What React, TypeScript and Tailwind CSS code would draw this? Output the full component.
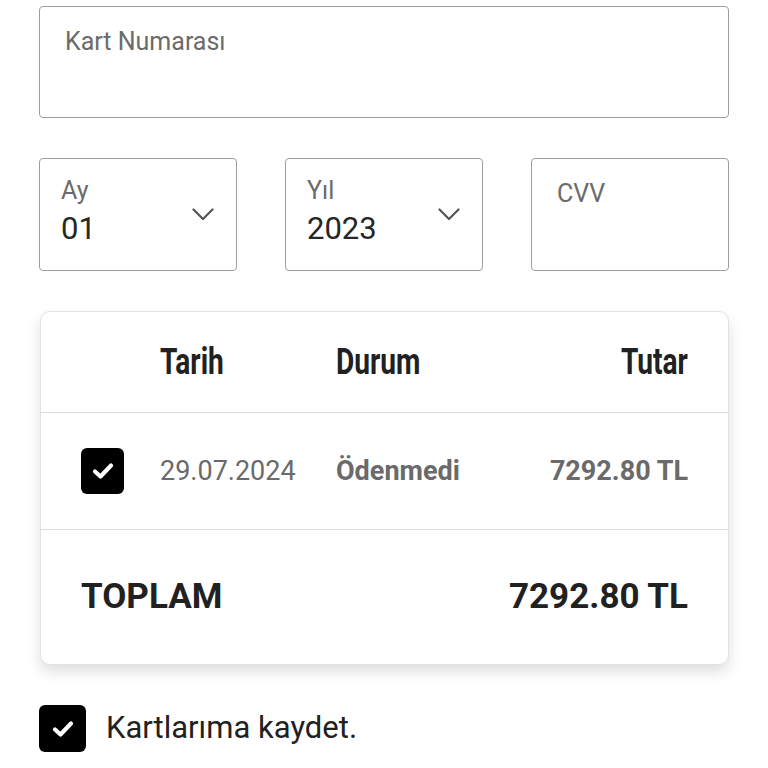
import { useState } from 'react';

function Chevron() {
  return (
    <svg width="22" height="13" viewBox="0 0 22 13" fill="none" className="shrink-0">
      <polyline points="1.5,1.5 11,11 20.5,1.5" stroke="#555" strokeWidth="2.2" strokeLinecap="round" strokeLinejoin="round" />
    </svg>
  );
}

function CheckBox({ checked, className }: { checked: boolean; className: string }) {
  return (
    <div className={`flex items-center justify-center rounded-[6px] ${checked ? 'bg-black' : 'border-2 border-black bg-white'} ${className}`}>
      {checked && (
        <svg width="22" height="18" viewBox="0 0 22 18" fill="none">
          <polyline points="3,9.5 8.5,14.5 19,3.5" stroke="#fff" strokeWidth="4.2" strokeLinecap="round" strokeLinejoin="round" />
        </svg>
      )}
    </div>
  );
}

function SelectBox({ label, value }: { label: string; value: string }) {
  return (
    <div className="h-[113px] border border-[#9e9e9e] rounded-[4px] flex items-center justify-between pl-[21px] pr-[22px]">
      <div className="flex flex-col pb-[6px]">
        <span className="text-[25px] leading-[30px] text-[#6b6b6b]">{label}</span>
        <span className="text-[31px] leading-[36px] text-[#262626] mt-[5px]">{value}</span>
      </div>
      <Chevron />
    </div>
  );
}

export default function App() {
  const [saveCard, setSaveCard] = useState(true);

  return (
    <div className="min-h-screen bg-white px-[39px] pt-[6px] font-['Roboto',sans-serif]">
      {/* Card number */}
      <div className="h-[112px] border border-[#9e9e9e] rounded-[4px] pl-[25px] pt-[20px]">
        <span className="text-[25px] leading-[30px] text-[#6b6b6b]">Kart Numarası</span>
      </div>

      {/* Expiry / CVV */}
      <div className="grid grid-cols-3 gap-[48px] mt-[40px]">
        <SelectBox label="Ay" value="01" />
        <SelectBox label="Yıl" value="2023" />
        <div className="h-[113px] border border-[#9e9e9e] rounded-[4px] pl-[25px] pt-[20px]">
          <span className="text-[25px] leading-[30px] text-[#6b6b6b]">CVV</span>
        </div>
      </div>

      {/* Summary table */}
      <div className="mt-[40px] ml-px border border-[#e2e2e2] rounded-[10px] bg-white shadow-[0_7px_14px_rgba(0,0,0,0.13)]">
        <div className="h-[101px] grid grid-cols-[79px_176px_1fr_auto] items-center px-[40px] border-b border-[#dcdcdc] text-[36px] font-bold text-[#212121]">
          <span />
          <span className="inline-block origin-left scale-x-[0.78] whitespace-nowrap">Tarih</span>
          <span className="inline-block origin-left scale-x-[0.78] whitespace-nowrap">Durum</span>
          <span className="inline-block origin-right scale-x-[0.78] whitespace-nowrap text-right">Tutar</span>
        </div>
        <div className="h-[117px] grid grid-cols-[79px_176px_1fr_auto] items-center px-[40px] border-b border-[#dcdcdc] text-[27px] text-[#6a6a6a]">
          <CheckBox checked className="w-[43px] h-[46px]" />
          <span>29.07.2024</span>
          <span className="font-bold">Ödenmedi</span>
          <span className="font-bold text-right">7292.80 TL</span>
        </div>
        <div className="h-[134px] flex items-center justify-between px-[40px] text-[35px] font-bold text-[#212121]">
          <span>TOPLAM</span>
          <span>7292.80 TL</span>
        </div>
      </div>

      {/* Save card */}
      <button onClick={() => setSaveCard(!saveCard)} className="mt-[40px] flex items-center gap-[20px]">
        <CheckBox checked={saveCard} className="w-[47px] h-[47px]" />
        <span className="text-[31px] text-[#212121]">Kartlarıma kaydet.</span>
      </button>
    </div>
  );
}
